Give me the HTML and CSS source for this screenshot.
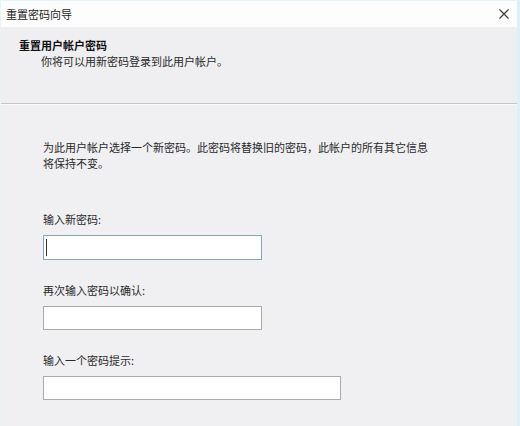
FILE: index.html
```html
<!DOCTYPE html>
<html lang="zh-CN">
<head>
  <meta charset="UTF-8">
  <meta name="viewport" content="width=device-width, initial-scale=1.0">
  <title>重置密码向导</title>
  <link rel="stylesheet" href="styles.css">
</head>
<body>
  <div class="wizard">
    <div class="titleBar">
      <span class="titleText">重置密码向导</span>
      <button class="closeBtn" type="button"><svg width="10" height="10" viewBox="0 0 10 10">
        <path d="M0.5 0.5 L9.5 9.5 M9.5 0.5 L0.5 9.5" stroke="#3a3a3a" stroke-width="1.2" fill="none"/>
      </svg></button>
    </div>

    <div class="wizardHeader">
      <div class="headerTitle">重置用户帐户密码</div>
      <div class="headerSub">你将可以用新密码登录到此用户帐户。</div>
    </div>

    <form class="wizardBody">
      <p class="intro">为此用户帐户选择一个新密码。此密码将替换旧的密码，此帐户的所有其它信息<br>将保持不变。</p>

      <div class="field">
        <label for="new_pw">输入新密码:</label>
        <div class="boxWrap">
          <input type="password" id="new_pw" class="textBox focused">
          <span class="caret"></span>
        </div>
      </div>

      <div class="field">
        <label for="confirm_pw">再次输入密码以确认:</label>
        <input type="password" id="confirm_pw" class="textBox">
      </div>

      <div class="field">
        <label for="hint">输入一个密码提示:</label>
        <input type="text" id="hint" class="textBox wide">
      </div>
    </form>
  </div>
</body>
</html>
```

FILE: styles.css
```css
body {
  margin: 0;
  background: #f0eff2;
  font-family: "Noto Sans CJK SC", "Noto Sans", sans-serif;
  font-size: 11px;
  color: #222;
}
.wizard {
  height: 426px;
  box-sizing: border-box;
  border-top: 1px solid #e3f6fc;
  border-left: 1px solid #e8f3f6;
  border-right: 3px solid #d9f1f9;
  background: #f0eff2;
}
.titleBar {
  height: 26px;
  display: flex;
  align-items: center;
  justify-content: space-between;
  padding: 0 8px 0 5px;
  background: #fdfdfd;
}
.titleText {
  color: #1e1e1e;
}
.closeBtn {
  border: none;
  background: none;
  padding: 0;
  width: 10px;
  height: 10px;
  display: flex;
}
.wizardHeader {
  height: 66px;
  padding: 10px 0 0 18px;
  background: #efeef1;
  border-bottom: 1px solid #c6c5c8;
  box-shadow: 0 1px 0 #fafafa;
  line-height: 16px;
}
.headerTitle {
  font-weight: bold;
  color: #111;
}
.headerSub {
  margin-left: 22px;
  color: #2a2a2a;
}
.wizardBody {
  padding: 35px 0 0 42px;
}
.intro {
  margin: 0;
  line-height: 16px;
  color: #2a2a2a;
}
.field {
  display: flex;
  flex-direction: column;
  align-items: flex-start;
  margin-top: 22px;
}
.field:first-of-type {
  margin-top: 40px;
}
.field label {
  line-height: 16px;
  margin-bottom: 8px;
  color: #2a2a2a;
}
.boxWrap {
  position: relative;
}
.textBox {
  display: block;
  width: 219px;
  height: 24px;
  box-sizing: border-box;
  margin: 0;
  border: 1px solid #ababab;
  background: #fff;
  outline: none;
}
.textBox.focused {
  height: 25px;
  border-color: #86a8b8;
}
.textBox.wide {
  width: 298px;
}
.caret {
  position: absolute;
  left: 3px;
  top: 4px;
  width: 1px;
  height: 17px;
  background: #333;
}
```
